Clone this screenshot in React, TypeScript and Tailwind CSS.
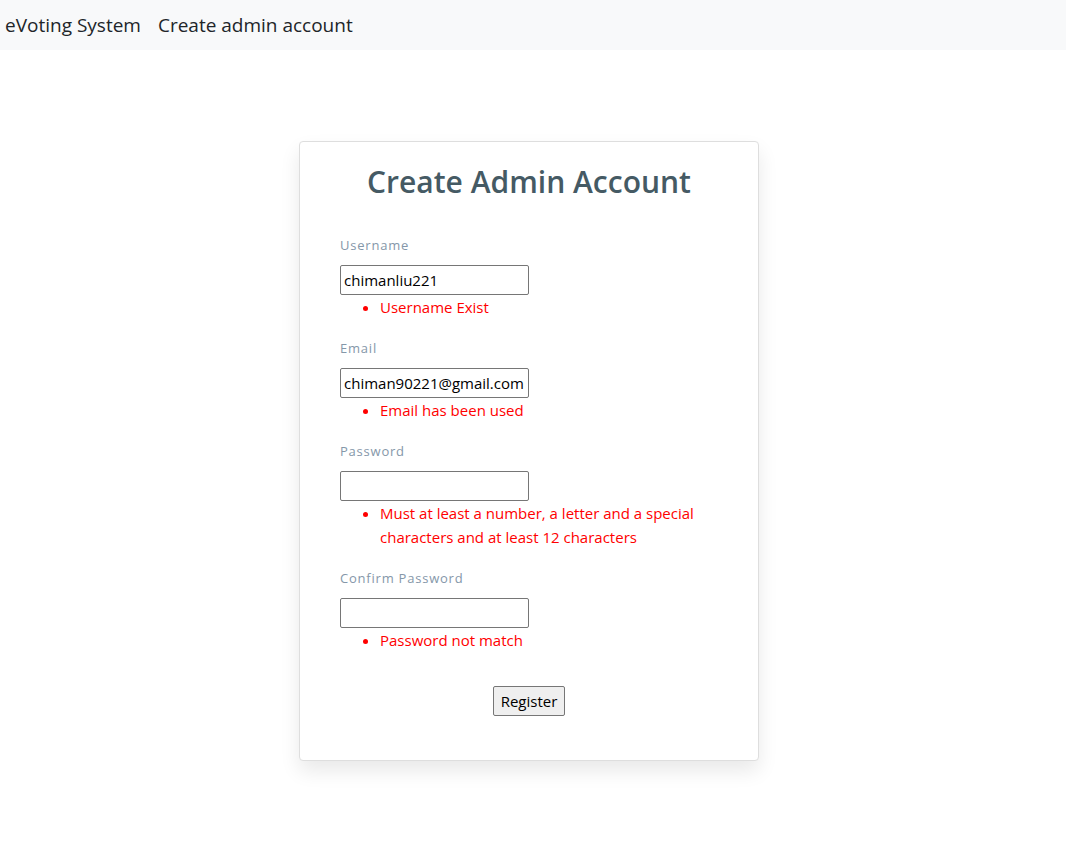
import React from 'react'

const font = { fontFamily: '"Open Sans", "Noto Sans", sans-serif' }

type Field = {
  label: string
  value: string
  errors: string[]
}

const fields: Field[] = [
  { label: 'Username', value: 'chimanliu221', errors: ['Username Exist'] },
  { label: 'Email', value: 'chiman90221@gmail.com', errors: ['Email has been used'] },
  {
    label: 'Password',
    value: '',
    errors: ['Must at least a number, a letter and a special characters and at least 12 characters'],
  },
  { label: 'Confirm Password', value: '', errors: ['Password not match'] },
]

function FormField({ field, first }: { field: Field; first: boolean }) {
  return (
    <div className={first ? 'mt-[34px]' : 'mt-[19px]'}>
      <label className="block h-5 text-[13px] leading-5 tracking-[0.06em] text-[#8597a9]">{field.label}</label>
      <input
        readOnly
        value={field.value}
        type="text"
        className="mt-[10px] block h-[30px] w-[189px] rounded-[2px] border border-[#767676] bg-white px-[3px] text-[15px] text-black outline-none"
      />
      <ul className="list-disc pl-10 text-[15px] leading-6 text-[#ff0000]">
        {field.errors.map((e) => (
          <li key={e}>{e}</li>
        ))}
      </ul>
    </div>
  )
}

export default function App() {
  return (
    <div className="min-h-[849px] bg-white" style={font}>
      <nav className="flex h-[50px] items-center gap-[17px] bg-[#f8f9fa] px-[5px] text-[19px] text-[#212529]">
        <span>eVoting System</span>
        <span>Create admin account</span>
      </nav>
      <div className="ml-[299px] mt-[91px] w-[460px] rounded border border-[#dedede] bg-white px-[40px] pb-[44px] pt-[21px] shadow-[0_10px_20px_rgba(0,0,0,0.09)]">
        <h1 className="text-center text-[30px] font-semibold leading-[38px] text-[#455a64]">Create Admin Account</h1>
        {fields.map((f, i) => (
          <FormField key={f.label} field={f} first={i === 0} />
        ))}
        <div className="mt-[34px] flex justify-center">
          <button className="h-[30px] w-[72px] rounded-[2px] border border-[#767676] bg-[#efefef] text-[15px] text-black">
            Register
          </button>
        </div>
      </div>
    </div>
  )
}
